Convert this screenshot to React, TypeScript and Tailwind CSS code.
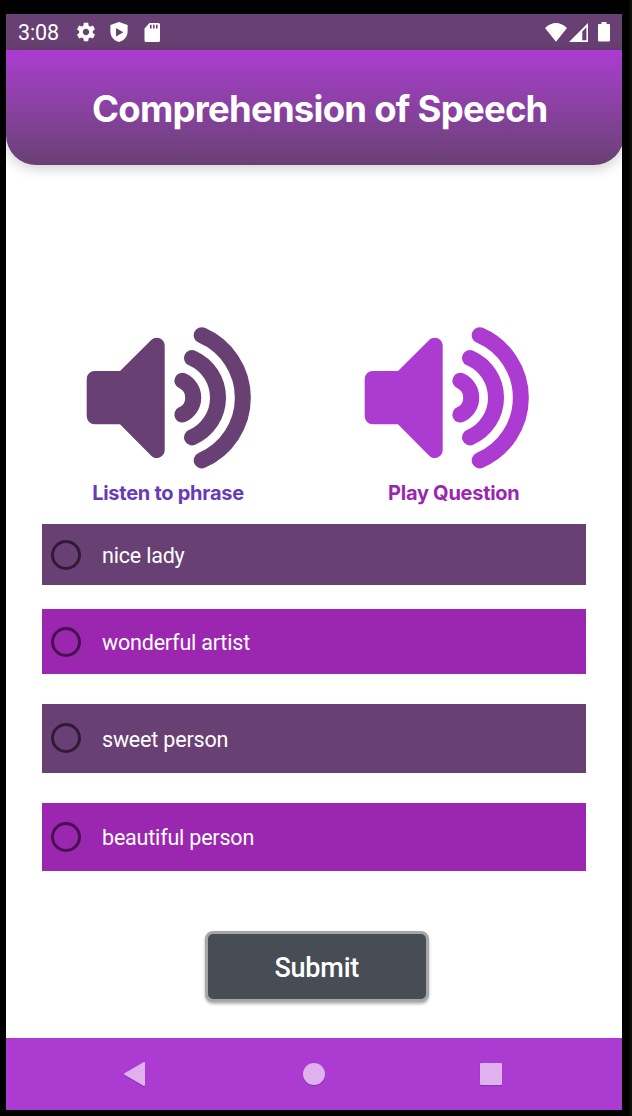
import { useState } from "react";

function Speaker({ className }: { className: string }) {
  return (
    <svg viewBox="0 0 166 144" className={"block h-[144px] w-[166px] " + className} fill="none" aria-hidden="true">
      <path
        fill="currentColor"
        d="M8.700 45H34L65.200 14C70 9 78.700 12.400 78.700 19.500V124C78.700 131 70 134.800 65.200 129.800L34 98.300H8.700A8 8 0 0 1 .7 90.300V53A8 8 0 0 1 8.700 45Z"
      />
      <g stroke="currentColor" strokeWidth="16" strokeLinecap="round">
        <path d="M96.400 54.800A18.600 18.600 0 0 1 96.400 88.600" />
        <path d="M106 32A43.300 43.300 0 0 1 106 111.400" />
        <path d="M115.700 9.200A68.200 68.200 0 0 1 115.700 134.400" />
      </g>
    </svg>
  );
}

function StatusBar() {
  return (
    <div className="flex h-9 shrink-0 items-center bg-[#694073] pl-3 text-white">
      <span className="w-[57px] pt-0.5 text-[21.500px] leading-6 tracking-[-0.100px]">3:08</span>
      <svg viewBox="0 0 24 24" className="h-[22px] w-[22px]" fill="currentColor" aria-hidden="true">
        <path d="M19.430 12.980c.04-.32.07-.64.07-.98s-.03-.66-.07-.98l2.110-1.650c.19-.15.24-.42.12-.64l-2-3.460c-.12-.22-.39-.3-.61-.22l-2.490 1c-.52-.4-1.080-.73-1.690-.98l-.38-2.650C14.460 2.180 14.250 2 14 2h-4c-.25 0-.46.18-.49.42l-.38 2.650c-.61.25-1.170.59-1.690.98l-2.490-1c-.23-.09-.49 0-.61.22l-2 3.460c-.13.22-.07.49.12.64l2.110 1.650c-.04.32-.07.65-.07.98s.03.66.07.98l-2.110 1.650c-.19.15-.24.42-.12.64l2 3.460c.12.22.39.3.61.22l2.490-1c.52.4 1.080.73 1.690.98l.38 2.650c.03.24.24.42.49.42h4c.25 0 .46-.18.49-.42l.38-2.650c.61-.25 1.170-.59 1.690-.98l2.490 1c.23.09.49 0 .61-.22l2-3.460c.12-.22.07-.49-.12-.64l-2.110-1.650zM12 15.500c-1.930 0-3.500-1.570-3.500-3.500s1.570-3.500 3.500-3.500 3.500 1.570 3.500 3.500-1.570 3.500-3.500 3.500z" />
      </svg>
      <svg viewBox="0 0 18 20" className="ml-[13px] h-5 w-[18px]" fill="currentColor" fillRule="evenodd" aria-hidden="true">
        <path d="M9 0L17.600 3V9.500C17.600 14.500 14.500 18.500 9 20C3.500 18.500.4 14.500.4 9.500V3ZM6 6V14.500L13.300 10.200Z" />
      </svg>
      <svg viewBox="0 0 16 19" className="ml-[15.500px] h-[19px] w-4" fill="currentColor" fillRule="evenodd" aria-hidden="true">
        <path d="M5.500 0H14.500Q16 0 16 1.500V17.500Q16 19 14.500 19H2Q.5 19 .5 17.500V5.500ZM6 1.700V5.500H7.600V1.700ZM9 1.700V5.500H10.600V1.700ZM12 1.700V5.500H13.600V1.700Z" />
      </svg>
      <div className="ml-auto flex items-center pr-3">
        <svg viewBox="0 0 22 19" className="h-[19px] w-[22px]" fill="currentColor" aria-hidden="true">
          <path d="M0 5Q11-4.800 22 5L11 18.800Z" />
        </svg>
        <svg viewBox="0 0 19 19" className="ml-[2px] h-[19px] w-[19px]" fill="currentColor" fillRule="evenodd" aria-hidden="true">
          <path d="M0 19L19 0V19ZM13.300 8.500V17.300H17.400V4.200Z" />
        </svg>
        <svg viewBox="0 0 12 20" className="ml-[10.500px] h-5 w-3" fill="currentColor" aria-hidden="true">
          <path d="M3.500 0H8.500V2H11Q12 2 12 3V18.500Q12 19.500 11 19.500H1Q0 19.500 0 18.500V3Q0 2 1 2H3.500Z" />
        </svg>
      </div>
    </div>
  );
}

const options = [
  { label: "nice lady", row: "h-[61.300px] bg-[#694073]", ring: "border-[#301b36]", text: "pt-0.5" },
  { label: "wonderful artist", row: "mt-6 h-[64.700px] bg-[#9b26af]", ring: "border-[#47104f]", text: "pt-0.5" },
  { label: "sweet person", row: "mt-[30px] h-[69px] bg-[#694073]", ring: "border-[#301b36]", text: "pt-[3px]" },
  { label: "beautiful person", row: "mt-[30.500px] h-[67.500px] bg-[#9b26af]", ring: "border-[#47104f]", text: "pt-0.5" },
];

export default function App() {
  const [selected, setSelected] = useState<string | null>(null);

  return (
    <div className="h-[1116px] w-[632px] overflow-hidden bg-[linear-gradient(to_right,#000_628px,#15130f_632px)] pl-1.5 pt-3.5 font-['Roboto',sans-serif]">
      <div className="flex h-[1096px] w-[616px] flex-col overflow-hidden bg-white">
        <StatusBar />
        <header className="flex h-[115px] w-[618px] shrink-0 items-center rounded-b-[30px] bg-linear-to-b from-[#ab3bd1] to-[#694073] pl-[86px] pt-0.5 shadow-[0_3px_14px_rgba(0,0,0,0.2)]">
          <h1 className="whitespace-nowrap font-['Inter',sans-serif] text-[36.500px] font-bold leading-[48px] tracking-[-0.750px] text-white">
            Comprehension of Speech
          </h1>
        </header>

        <div className="mt-[161px] flex pl-20 font-['Inter',sans-serif] text-[20px] font-bold leading-6 tracking-[-0.270px]">
          <button className="flex w-[166px] flex-col items-center">
            <Speaker className="text-[#694073]" />
            <span className="mt-[11px] whitespace-nowrap pr-[2px] text-[#673ab7]">Listen to phrase</span>
          </button>
          <button className="ml-[112.300px] flex w-[166px] flex-col items-center">
            <Speaker className="text-[#ab3bd1]" />
            <span className="mt-[11px] whitespace-nowrap pl-[13px] text-[#9b26af]">Play Question</span>
          </button>
        </div>

        <div role="radiogroup" className="mt-[19px] flex flex-col px-9">
          {options.map((o) => (
            <button
              key={o.label}
              role="radio"
              aria-checked={selected === o.label}
              onClick={() => setSelected(o.label)}
              className={"flex shrink-0 items-center pl-[9px] text-left " + o.row}
            >
              <span className={"flex h-[30px] w-[30px] items-center justify-center rounded-full border-3 " + o.ring}>
                {selected === o.label && <span className="h-3.5 w-3.5 rounded-full bg-black/60" />}
              </span>
              <span className={"ml-[21px] text-[21.500px] leading-6 tracking-[-0.190px] text-white " + o.text}>
                {o.label}
              </span>
            </button>
          ))}
        </div>

        <button className="ml-[198.500px] mt-[60px] flex h-[71px] w-[224.500px] shrink-0 items-center justify-center rounded-[8px] border-3 border-[#a6a6a6] bg-[#464d55] pt-[3px] text-[27px] font-medium leading-8 tracking-[-0.200px] text-white shadow-[0_2px_3px_rgba(0,0,0,0.3)]">
          Submit
        </button>

        <nav className="mt-auto flex h-[72px] shrink-0 items-center bg-[#ab3bd1] pl-[117px] text-[#dfb1ed]">
          <svg viewBox="0 0 23 26" className="h-[26px] w-[23px] drop-shadow-[0_1px_0.500px_rgba(0,0,0,0.2)]" aria-hidden="true">
            <path d="M2 13L21 2V24Z" fill="currentColor" stroke="currentColor" strokeWidth="2" strokeLinejoin="round" />
          </svg>
          <span className="ml-[157px] h-[22px] w-[22px] rounded-full bg-[#dfb1ed] shadow-[0_1px_1px_rgba(0,0,0,0.2)]" />
          <span className="ml-[155.300px] h-[22px] w-[22px] rounded-[1px] bg-[#dfb1ed] shadow-[0_1px_1px_rgba(0,0,0,0.2)]" />
        </nav>
      </div>
    </div>
  );
}
